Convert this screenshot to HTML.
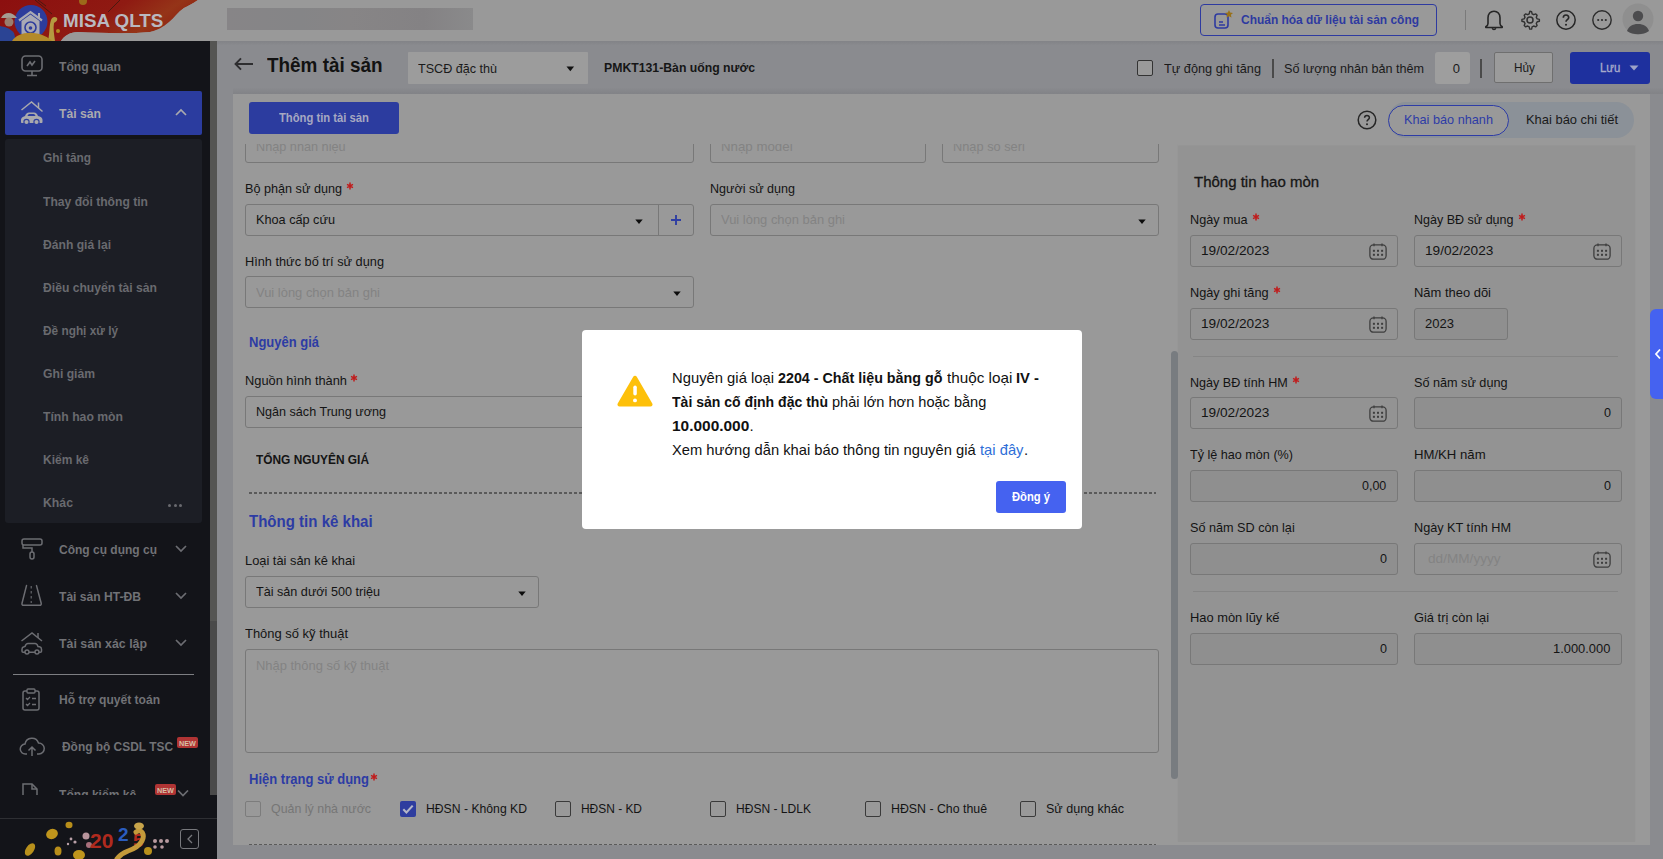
<!DOCTYPE html>
<html lang="vi"><head><meta charset="utf-8"><title>MISA QLTS - Thêm tài sản</title>
<style>
html,body{margin:0;padding:0;}
body{width:1663px;height:859px;overflow:hidden;position:relative;font-family:"Liberation Sans",sans-serif;background:#8a8b8f;}
body *{font-family:"Liberation Sans",sans-serif;}
</style></head><body>

<div style="position:absolute;left:0px;top:0px;width:1663px;height:41px;background:#999999"></div>
<div style="position:absolute;left:0px;top:41px;width:217px;height:818px;background:#131419"></div>
<div style="position:absolute;left:217px;top:41px;width:1446px;height:818px;background:#8a8b8f"></div>
<div style="position:absolute;left:217px;top:41px;width:1446px;height:4px;background:linear-gradient(#828387,#898a8e)"></div>
<div style="position:absolute;left:233px;top:88px;width:1430px;height:6px;background:linear-gradient(#898a8e,#828387)"></div>
<svg style="position:absolute;left:0;top:0" width="205" height="41" viewBox="0 0 205 41">
<defs><linearGradient id="rg" x1="0" y1="0" x2="1" y2="0.3"><stop offset="0" stop-color="#8c0f0f"/><stop offset="0.6" stop-color="#8f1a12"/><stop offset="0.85" stop-color="#953418"/><stop offset="1" stop-color="#8f2412"/></linearGradient></defs>
<path d="M0 0 H198 C192 4 188 6 184 8 C178 12 174 18 169 22 C163 27 158 30 150 32 C130 34 100 33 78 32 C70 32 64 36 61 41 H0 Z" fill="url(#rg)"/>
<circle cx="31" cy="21.5" r="16.5" fill="#2d3c9c"/>
<path d="M19 20.5 L30.5 12 L42 20.5" fill="none" stroke="#a9a9b4" stroke-width="2.2"/>
<path d="M39 13v5" stroke="#a9a9b4" stroke-width="2"/>
<path d="M21.5 21 L30.5 14.5 L39.5 21 V34 H21.5 Z" fill="#a9a9b4"/>
<circle cx="30.5" cy="27.5" r="5.5" fill="none" stroke="#2d3c9c" stroke-width="1.6"/>
<circle cx="30.5" cy="28" r="1.8" fill="#2d3c9c"/>
<path d="M1 18 C4 12 12 11 17 18 Z" fill="#a59d92"/>
<circle cx="9" cy="22" r="4.5" fill="#9a7d6e"/>
<path d="M0 26 C5 27 10 28 14 33 L16 41 H0Z" fill="#2b4494"/>
<path d="M48 41 C50 32 49 26 51 20 C52 17 55 16 57 18 C58 20 56 22 54 23 C53 28 54 34 55 41 Z" fill="#b59a40"/>
<path d="M12 41 C16 35 24 32 34 33 C42 34 48 37 52 41 Z" fill="#b38a2a"/>
<circle cx="58" cy="31" r="2" fill="#b58a20"/>
<circle cx="83" cy="1" r="4" fill="#9c6a1a"/>
<path d="M35 0 L52 14 M38 0 L46 6" stroke="#3a1a10" stroke-width="0.8"/>
<path d="M120 0 L108 12" stroke="#3a1a10" stroke-width="0.8"/>
<path d="M150 32 C160 30 166 26 170 22 C174 18 178 12 184 8 C188 6 192 4 198 0 H205 V41 H61 C64 36 70 32 78 32 C100 33 130 34 150 32Z" fill="#999999"/>
</svg>
<span style="position:absolute;left:62.50px;top:10.92px;font-size:19px;line-height:19px;font-weight:700;color:#b9b9c0;white-space:nowrap;transform:scaleX(0.9899);transform-origin:0 0;">MISA QLTS</span>
<div style="position:absolute;left:227px;top:8px;width:246px;height:22px;background:linear-gradient(90deg,#878587,#858587 30%,#878586 50%,#848284 80%,#8a8a8b)"></div>
<div style="position:absolute;left:1200px;top:4px;width:237px;height:32px;box-sizing:border-box;border:1.5px solid #2e3aa0;border-radius:4px"></div>
<svg style="position:absolute;left:1212px;top:9px;" width="22" height="22" viewBox="0 0 22 22"><rect x="3" y="5" width="13" height="14" rx="3" fill="none" stroke="#2e3aa0" stroke-width="1.6"/><path d="M7 13h4M7 16h6" stroke="#2e3aa0" stroke-width="1.4"/><path d="M17 1l1.2 2.6 2.8.3-2.1 1.9.6 2.8-2.5-1.4-2.5 1.4.6-2.8-2.1-1.9 2.8-.3z" fill="#98711a"/></svg>
<span style="position:absolute;left:1241.00px;top:13.00px;font-size:13px;line-height:13px;font-weight:700;color:#2e3aa0;white-space:nowrap;transform:scaleX(0.9194);transform-origin:0 0;">Chuẩn hóa dữ liệu tài sản công</span>
<div style="position:absolute;left:1465px;top:10px;width:1px;height:20px;background:#7a7a7a"></div>
<svg style="position:absolute;left:1483px;top:9px;" width="22" height="22" viewBox="0 0 22 22"><path d="M11 2.2c-3.6 0-6 2.8-6 6.6v5.6c0 1.2-.8 2.4-2.2 3.3v.8h16.4v-.8c-1.4-.9-2.2-2.1-2.2-3.3V8.8c0-3.8-2.4-6.6-6-6.6z" fill="none" stroke="#262626" stroke-width="1.6" stroke-linejoin="round"/><path d="M9.3 19.2c.2.9.9 1.3 1.7 1.3s1.5-.4 1.7-1.3" fill="none" stroke="#262626" stroke-width="1.5"/></svg>
<svg style="position:absolute;left:1519px;top:9px;" width="22" height="22" viewBox="0 0 22 22"><path d="M11 2.3l1.6.3.5 2.2 1.6.9 2.1-.8 1.3 1.3-.8 2.1.9 1.6 2.2.5v1.9l-2.2.5-.9 1.6.8 2.1-1.3 1.3-2.1-.8-1.6.9-.5 2.2h-1.9l-.5-2.2-1.6-.9-2.1.8-1.3-1.3.8-2.1-.9-1.6-2.2-.5v-1.9l2.2-.5.9-1.6-.8-2.1 1.3-1.3 2.1.8 1.6-.9.5-2.2z" fill="none" stroke="#303030" stroke-width="1.4" stroke-linejoin="round"/><circle cx="11" cy="11" r="3" fill="none" stroke="#303030" stroke-width="1.5"/></svg>
<svg style="position:absolute;left:1555px;top:9px;" width="22" height="22" viewBox="0 0 22 22"><circle cx="11" cy="11" r="9.2" fill="none" stroke="#262626" stroke-width="1.5"/><path d="M8.3 8.7a2.7 2.7 0 015.4 0c0 1.9-2.7 2.1-2.7 4" fill="none" stroke="#262626" stroke-width="1.6"/><circle cx="11" cy="15.7" r="1.05" fill="#262626"/></svg>
<svg style="position:absolute;left:1591px;top:9px;" width="22" height="22" viewBox="0 0 22 22"><circle cx="11" cy="11" r="9.2" fill="none" stroke="#2c2c2c" stroke-width="1.4"/><circle cx="7.2" cy="11" r="1.1" fill="#2c2c2c"/><circle cx="11" cy="11" r="1.1" fill="#2c2c2c"/><circle cx="14.8" cy="11" r="1.1" fill="#2c2c2c"/></svg>
<svg style="position:absolute;left:1622px;top:3px;" width="32" height="32" viewBox="0 0 32 32"><circle cx="16" cy="16" r="15.5" fill="#8f8f8f"/><circle cx="16" cy="13" r="5.2" fill="#4c4c4e"/><path d="M5 28c1.5-4.5 5.5-7 11-7s9.5 2.5 11 7c-3 2.3-7 3.3-11 3.3S8 30.300 5 28z" fill="#4c4c4e"/></svg>
<svg style="position:absolute;left:20px;top:54px;" width="24" height="24" viewBox="0 0 24 24"><rect x="2" y="2" width="20" height="15" rx="3.5" fill="none" stroke="#6c6d72" stroke-width="1.6"/><path d="M12 17v4M7 21.5h10" stroke="#6c6d72" stroke-width="1.6"/><path d="M7 12l3-4 2 3 3-4" fill="none" stroke="#6c6d72" stroke-width="1.6"/></svg>
<span style="position:absolute;left:59.00px;top:59.50px;font-size:13px;line-height:13px;font-weight:700;color:#717276;white-space:nowrap;transform:scaleX(0.9332);transform-origin:0 0;">Tổng quan</span>
<div style="position:absolute;left:5px;top:91px;width:197px;height:44px;background:#2b3c9f;border-radius:2px"></div>
<svg style="position:absolute;left:20px;top:100px;" width="25" height="26" viewBox="0 0 25 26"><path d="M1.5 10L11.5 2l11 9.5" fill="none" stroke="#a9a9ad" stroke-width="1.5"/><path d="M18.5 2.5v5.5" stroke="#a9a9ad" stroke-width="1.5"/><path d="M5 16c.8-2.3 2-3.6 4-3.6h5c2 0 3.2 1.3 4 3.6l1.6.4c1.6.4 2.9 1.7 2.9 3.4v2.2c0 .6-.4 1-1 1H2c-.6 0-1-.4-1-1v-2.2c0-1.7 1.3-3 2.9-3.4z" fill="#a9a9ad"/><path d="M7.5 16c.4-1.3 1-2 2-2h4c1 0 1.6.7 2 2z" fill="#2b3c9f"/><circle cx="6.5" cy="22" r="2.6" fill="#a9a9ad" stroke="#2b3c9f" stroke-width="1.1"/><circle cx="16.5" cy="22" r="2.6" fill="#a9a9ad" stroke="#2b3c9f" stroke-width="1.1"/></svg>
<span style="position:absolute;left:59.00px;top:107.00px;font-size:13px;line-height:13px;font-weight:700;color:#aaaaae;white-space:nowrap;transform:scaleX(0.9376);transform-origin:0 0;">Tài sản</span>
<svg style="position:absolute;left:174px;top:107px;" width="14" height="10" viewBox="0 0 14 10"><path d="M2 8l5-5 5 5" fill="none" stroke="#aaaaae" stroke-width="1.7"/></svg>
<div style="position:absolute;left:5px;top:139px;width:197px;height:384px;background:#1c1e25;border-radius:3px"></div>
<span style="position:absolute;left:43.00px;top:151.40px;font-size:13px;line-height:13px;font-weight:700;color:#696a6f;white-space:nowrap;transform:scaleX(0.9105);transform-origin:0 0;">Ghi tăng</span>
<span style="position:absolute;left:43.00px;top:194.50px;font-size:13px;line-height:13px;font-weight:700;color:#696a6f;white-space:nowrap;transform:scaleX(0.9320);transform-origin:0 0;">Thay đổi thông tin</span>
<span style="position:absolute;left:43.00px;top:237.60px;font-size:13px;line-height:13px;font-weight:700;color:#696a6f;white-space:nowrap;transform:scaleX(0.9319);transform-origin:0 0;">Đánh giá lại</span>
<span style="position:absolute;left:43.00px;top:280.70px;font-size:13px;line-height:13px;font-weight:700;color:#696a6f;white-space:nowrap;transform:scaleX(0.9337);transform-origin:0 0;">Điều chuyển tài sản</span>
<span style="position:absolute;left:43.00px;top:323.80px;font-size:13px;line-height:13px;font-weight:700;color:#696a6f;white-space:nowrap;transform:scaleX(0.9105);transform-origin:0 0;">Đề nghị xử lý</span>
<span style="position:absolute;left:43.00px;top:366.90px;font-size:13px;line-height:13px;font-weight:700;color:#696a6f;white-space:nowrap;transform:scaleX(0.9348);transform-origin:0 0;">Ghi giảm</span>
<span style="position:absolute;left:43.00px;top:410.00px;font-size:13px;line-height:13px;font-weight:700;color:#696a6f;white-space:nowrap;transform:scaleX(0.9388);transform-origin:0 0;">Tính hao mòn</span>
<span style="position:absolute;left:43.00px;top:453.10px;font-size:13px;line-height:13px;font-weight:700;color:#696a6f;white-space:nowrap;transform:scaleX(0.9223);transform-origin:0 0;">Kiểm kê</span>
<span style="position:absolute;left:43.00px;top:496.20px;font-size:13px;line-height:13px;font-weight:700;color:#696a6f;white-space:nowrap;transform:scaleX(0.9435);transform-origin:0 0;">Khác</span>
<div style="position:absolute;left:168.0px;top:504px;width:3.0px;height:3px;background:#696a6f;border-radius:50%"></div>
<div style="position:absolute;left:173.5px;top:504px;width:3.0px;height:3px;background:#696a6f;border-radius:50%"></div>
<div style="position:absolute;left:179.0px;top:504px;width:3.0px;height:3px;background:#696a6f;border-radius:50%"></div>
<svg style="position:absolute;left:20px;top:537px;" width="24" height="24" viewBox="0 0 24 24"><rect x="2" y="2" width="20" height="6" rx="2" fill="none" stroke="#6c6d72" stroke-width="1.5"/><path d="M3 8v3h9v4" fill="none" stroke="#6c6d72" stroke-width="1.5"/><rect x="10" y="15" width="4" height="7" rx="2" fill="none" stroke="#6c6d72" stroke-width="1.5"/></svg>
<span style="position:absolute;left:59.00px;top:543.00px;font-size:13px;line-height:13px;font-weight:700;color:#717276;white-space:nowrap;transform:scaleX(0.9232);transform-origin:0 0;">Công cụ dụng cụ</span>
<svg style="position:absolute;left:20px;top:584px;" width="24" height="24" viewBox="0 0 24 24"><path d="M6.5 1.6L2 19.3c-.3 1.2.4 2 1.5 2h16.2c1.1 0 1.8-.8 1.5-2L16.5 1.6" fill="none" stroke="#6c6d72" stroke-width="1.5" stroke-linecap="round" stroke-linejoin="round"/><path d="M11.2 2v2.5M11.2 7v2.5M11.2 12v2.5M11.2 17v2" stroke="#6c6d72" stroke-width="1.1"/></svg>
<span style="position:absolute;left:59.00px;top:590.00px;font-size:13px;line-height:13px;font-weight:700;color:#717276;white-space:nowrap;transform:scaleX(0.9305);transform-origin:0 0;">Tài sản HT-ĐB</span>
<svg style="position:absolute;left:20px;top:631px;" width="25" height="25" viewBox="0 0 25 25"><path d="M1.5 10L12 2l10 8" fill="none" stroke="#6c6d72" stroke-width="1.5"/><path d="M18 2v5" stroke="#6c6d72" stroke-width="1.5"/><path d="M5 15.5c.6-2 1.5-3 3-3h7c1.5 0 2.4 1 3 3l1.5.3c1.2.3 2 1.2 2 2.4v2c0 .6-.4 1-1 1H3c-.6 0-1-.4-1-1v-2c0-1.2.8-2.1 2-2.4z" fill="none" stroke="#6c6d72" stroke-width="1.5"/><circle cx="7" cy="21" r="2" fill="#131419" stroke="#6c6d72" stroke-width="1.4"/><circle cx="17" cy="21" r="2" fill="#131419" stroke="#6c6d72" stroke-width="1.4"/></svg>
<span style="position:absolute;left:59.00px;top:636.80px;font-size:13px;line-height:13px;font-weight:700;color:#717276;white-space:nowrap;transform:scaleX(0.9514);transform-origin:0 0;">Tài sản xác lập</span>
<svg style="position:absolute;left:174px;top:544px;top:544px" width="14" height="10" viewBox="0 0 14 10"><path d="M2 2l5 5 5-5" fill="none" stroke="#6c6d72" stroke-width="1.7"/></svg>
<svg style="position:absolute;left:174px;top:544px;top:591px" width="14" height="10" viewBox="0 0 14 10"><path d="M2 2l5 5 5-5" fill="none" stroke="#6c6d72" stroke-width="1.7"/></svg>
<svg style="position:absolute;left:174px;top:544px;top:638px" width="14" height="10" viewBox="0 0 14 10"><path d="M2 2l5 5 5-5" fill="none" stroke="#6c6d72" stroke-width="1.7"/></svg>
<div style="position:absolute;left:13px;top:673.5px;width:181px;height:1.5px;background:#7d7e82"></div>
<svg style="position:absolute;left:20px;top:688px;" width="24" height="24" viewBox="0 0 24 24"><rect x="3" y="3" width="16" height="19" rx="2" fill="none" stroke="#6c6d72" stroke-width="1.5"/><rect x="7" y="1" width="8" height="4" rx="1" fill="#131419" stroke="#6c6d72" stroke-width="1.4"/><path d="M6 10l1.5 1.5L10 9M6 16l1.5 1.5L10 15M12 10.5h4M12 16.5h4" fill="none" stroke="#6c6d72" stroke-width="1.3"/></svg>
<span style="position:absolute;left:59.00px;top:693.00px;font-size:13px;line-height:13px;font-weight:700;color:#717276;white-space:nowrap;transform:scaleX(0.9273);transform-origin:0 0;">Hỗ trợ quyết toán</span>
<svg style="position:absolute;left:19px;top:735px;" width="27" height="24" viewBox="0 0 27 24"><path d="M8 19H6.5a5 5 0 01-.5-10A7 7 0 0119.5 8 5.5 5.5 0 0120 19h-2" fill="none" stroke="#6c6d72" stroke-width="1.5"/><path d="M13 21v-9M9.5 15.5L13 12l3.5 3.5" fill="none" stroke="#6c6d72" stroke-width="1.5"/></svg>
<span style="position:absolute;left:61.50px;top:740.00px;font-size:13px;line-height:13px;font-weight:700;color:#717276;white-space:nowrap;transform:scaleX(0.9166);transform-origin:0 0;">Đồng bộ CSDL TSC</span>
<div style="position:absolute;left:177px;top:737px;width:21px;height:11px;background:#b03434;border-radius:2px"></div>
<span style="position:absolute;left:179.00px;top:740.37px;font-size:7px;line-height:7px;font-weight:700;color:#d6bfa6;white-space:nowrap;transform:scaleX(1.0402);transform-origin:0 0;">NEW</span>
<div style="position:absolute;left:0;top:779px;width:209px;height:16px;overflow:hidden"><svg style="position:absolute;left:20px;top:3px" width="24" height="24" viewBox="0 0 24 24"><path d="M3 2h9l5 5v15H3z" fill="none" stroke="#6c6d72" stroke-width="1.5"/><path d="M12 2v5h5" fill="none" stroke="#6c6d72" stroke-width="1.5"/></svg></div>
<div style="position:absolute;left:0;top:779px;width:209px;height:15.5px;overflow:hidden"><span style="position:absolute;left:59px;top:8.5px;font-size:13px;line-height:13px;font-weight:700;color:#717276;white-space:nowrap;transform:scaleX(0.93);transform-origin:0 0">Tổng kiểm kê</span></div>
<div style="position:absolute;left:155px;top:784px;width:21px;height:11px;background:#b03434;border-radius:2px"></div>
<span style="position:absolute;left:157.00px;top:787.37px;font-size:7px;line-height:7px;font-weight:700;color:#d6bfa6;white-space:nowrap;transform:scaleX(1.0402);transform-origin:0 0;">NEW</span>
<svg style="position:absolute;left:176px;top:790px" width="14" height="7" viewBox="0 0 14 7"><path d="M2 0.5l5 5 5-5" fill="none" stroke="#6c6d72" stroke-width="1.7"/></svg>
<div style="position:absolute;left:209.5px;top:41px;width:7.5px;height:580px;background:#555553"></div>
<div style="position:absolute;left:209.5px;top:621px;width:7.5px;height:174px;background:#4a4a4a"></div>
<div style="position:absolute;left:0px;top:817.5px;width:217px;height:1.0px;background:#2e2f33"></div>
<svg style="position:absolute;left:0;top:818px" width="178" height="41" viewBox="0 818 178 41">
<ellipse cx="30" cy="849.5" rx="4" ry="7" fill="#b8901c" transform="rotate(35 30 849.5)"/>
<ellipse cx="52" cy="834" rx="6" ry="5" fill="#bf951c" transform="rotate(-20 52 834)"/>
<ellipse cx="69" cy="825" rx="3.5" ry="3.2" fill="#b88e1a"/>
<ellipse cx="58" cy="851" rx="3.5" ry="4.5" fill="#b88e1a"/>
<ellipse cx="79" cy="855" rx="6" ry="5" fill="#bf951c"/>
<circle cx="71" cy="839" r="1.4" fill="#b9a0a8"/><circle cx="75" cy="842" r="1.6" fill="#b9a0a8"/><circle cx="68" cy="844" r="1.2" fill="#b9a0a8"/>
<circle cx="86" cy="836" r="3.5" fill="#b8959c"/><circle cx="89" cy="845" r="3" fill="#a86f7c"/>
<text x="90" y="848" font-family="Liberation Sans" font-weight="700" font-size="21" fill="#b02a1e">20</text>
<text x="118" y="841" font-family="Liberation Sans" font-weight="700" font-size="19" fill="#2a5cbf">2</text>
<text x="133" y="847" font-family="Liberation Sans" font-weight="700" font-size="19" fill="#b02a1e">5</text>
<path d="M136 832c6-4 9 3 6 9-3 5-8 8-14 10-5 2-9 5-11 8" fill="none" stroke="#c49a3a" stroke-width="5" stroke-linecap="round"/>
<ellipse cx="139" cy="826" rx="5" ry="3.5" fill="#c7a44a"/>
<circle cx="148" cy="851" r="4" fill="#b8901c"/>
<circle cx="155" cy="841" r="2" fill="#b89aa0"/><circle cx="161" cy="841" r="2" fill="#b89aa0"/><circle cx="167" cy="841" r="2" fill="#b89aa0"/><circle cx="155" cy="847" r="1.8" fill="#b89aa0"/><circle cx="162" cy="847" r="1.8" fill="#b89aa0"/>
</svg>
<div style="position:absolute;left:180px;top:829px;width:19px;height:20px;box-sizing:border-box;border:1.5px solid #77787c;border-radius:3px"></div>
<svg style="position:absolute;left:184px;top:833px;" width="12" height="12" viewBox="0 0 12 12"><path d="M8 2L4 6l4 4" fill="none" stroke="#77787c" stroke-width="1.3"/></svg>
<svg style="position:absolute;left:233px;top:56px;" width="22" height="16" viewBox="0 0 22 16"><path d="M2.5 8h17.5M8 2.3L2.5 8l5.5 5.7" fill="none" stroke="#2e2e30" stroke-width="1.9"/></svg>
<span style="position:absolute;left:267.20px;top:54.87px;font-size:20px;line-height:20px;font-weight:700;color:#121212;white-space:nowrap;transform:scaleX(0.9455);transform-origin:0 0;">Thêm tài sản</span>
<div style="position:absolute;left:408px;top:52px;width:180px;height:32px;background:#9c9c9c;border-radius:1px"></div>
<span style="position:absolute;left:417.50px;top:62.00px;font-size:13px;line-height:13px;font-weight:400;color:#1a1a1a;white-space:nowrap;transform:scaleX(0.9675);transform-origin:0 0;">TSCĐ đặc thù</span>
<svg style="position:absolute;left:566px;top:66px;" width="9" height="6" viewBox="0 0 9 6"><path d="M0.5 0.5h7.6L4.3 5.2z" fill="#111"/></svg>
<span style="position:absolute;left:604.00px;top:61.00px;font-size:13px;line-height:13px;font-weight:700;color:#161616;white-space:nowrap;transform:scaleX(0.9424);transform-origin:0 0;">PMKT131-Bàn uống nước</span>
<div style="position:absolute;left:1137px;top:60px;width:16px;height:16px;box-sizing:border-box;border:1.3px solid #333333;border-radius:2px;background:#9a9a9a"></div>
<span style="position:absolute;left:1164.00px;top:62.00px;font-size:13px;line-height:13px;font-weight:400;color:#1a1a1a;white-space:nowrap;transform:scaleX(0.9792);transform-origin:0 0;">Tự động ghi tăng</span>
<div style="position:absolute;left:1272px;top:59px;width:2px;height:18.5px;background:#4a4a4a"></div>
<span style="position:absolute;left:1284.00px;top:62.00px;font-size:13px;line-height:13px;font-weight:400;color:#1a1a1a;white-space:nowrap;transform:scaleX(0.9693);transform-origin:0 0;">Số lượng nhân bản thêm</span>
<div style="position:absolute;left:1435px;top:52px;width:35px;height:32px;background:#9e9e9e;border-radius:3px"></div>
<span style="position:absolute;left:1406.30px;width:100px;text-align:center;top:62.00px;font-size:13px;line-height:13px;font-weight:400;color:#1a1a1a;white-space:nowrap;">0</span>
<div style="position:absolute;left:1480px;top:59px;width:2px;height:18.5px;background:#4a4a4a"></div>
<div style="position:absolute;left:1494px;top:52px;width:59px;height:31px;box-sizing:border-box;border:1px solid #6f6f6f;border-radius:2px;background:#9b9b9b"></div>
<span style="position:absolute;left:1513.50px;top:61.00px;font-size:13px;line-height:13px;font-weight:400;color:#1a1a1a;white-space:nowrap;transform:scaleX(0.9081);transform-origin:0 0;">Hủy</span>
<div style="position:absolute;left:1570px;top:52px;width:80px;height:32px;background:#1e309e;border-radius:3px"></div>
<span style="position:absolute;left:1600.00px;top:61.00px;font-size:13px;line-height:13px;font-weight:400;color:#a6aacb;white-space:nowrap;transform:scaleX(0.8761);transform-origin:0 0;-webkit-text-stroke:0.35px #a6aacb;">Lưu</span>
<svg style="position:absolute;left:1628px;top:64px;" width="12" height="8" viewBox="0 0 12 8"><path d="M1.5 1.5h9L6 6.5z" fill="#9ea3c8"/></svg>
<div style="position:absolute;left:233px;top:94px;width:1417px;height:751px;background:#999999"></div>
<div style="position:absolute;left:1178px;top:146px;width:457px;height:696px;background:#939393;box-shadow:0 -1px 2px rgba(0,0,0,0.04)"></div>
<div style="position:absolute;left:245px;top:132px;width:449px;height:31px;box-sizing:border-box;border:1px solid #787878;border-radius:3px;"></div>
<span style="position:absolute;left:256.00px;top:140.00px;font-size:13px;line-height:13px;font-weight:400;color:#838383;white-space:nowrap;transform:scaleX(0.9759);transform-origin:0 0;">Nhập nhãn hiệu</span>
<div style="position:absolute;left:710px;top:132px;width:216px;height:31px;box-sizing:border-box;border:1px solid #787878;border-radius:3px;"></div>
<span style="position:absolute;left:721.00px;top:140.00px;font-size:13px;line-height:13px;font-weight:400;color:#838383;white-space:nowrap;transform:scaleX(1.0213);transform-origin:0 0;">Nhập model</span>
<div style="position:absolute;left:942px;top:132px;width:217px;height:31px;box-sizing:border-box;border:1px solid #787878;border-radius:3px;"></div>
<span style="position:absolute;left:953.00px;top:140.00px;font-size:13px;line-height:13px;font-weight:400;color:#838383;white-space:nowrap;transform:scaleX(0.9838);transform-origin:0 0;">Nhập số seri</span>
<span style="position:absolute;left:245.00px;top:182.00px;font-size:13px;line-height:13px;font-weight:400;color:#141414;white-space:nowrap;transform:scaleX(0.9721);transform-origin:0 0;">Bộ phận sử dụng</span>
<svg style="position:absolute;left:346px;top:182px;" width="8" height="8" viewBox="0 0 8 8"><path d="M4 0.6V7.4M1.05 2.3L6.95 5.7M1.05 5.7L6.95 2.3" stroke="#c01c1c" stroke-width="1.5"/></svg>
<div style="position:absolute;left:245px;top:204px;width:449px;height:32px;box-sizing:border-box;border:1px solid #787878;border-radius:3px;"></div>
<div style="position:absolute;left:658px;top:205px;width:1px;height:30px;background:#787878"></div>
<span style="position:absolute;left:256.00px;top:212.80px;font-size:13px;line-height:13px;font-weight:400;color:#141414;white-space:nowrap;transform:scaleX(0.9755);transform-origin:0 0;">Khoa cấp cứu</span>
<svg style="position:absolute;left:634.5px;top:219.3px;" width="8" height="6" viewBox="0 0 8 6"><path d="M0.3 0.5h7.4L4 5z" fill="#0d0d0d"/></svg>
<svg style="position:absolute;left:669px;top:213px;" width="14" height="14" viewBox="0 0 14 14"><path d="M7 2v10M2 7h10" stroke="#2f3ea2" stroke-width="1.9"/></svg>
<span style="position:absolute;left:710.00px;top:182.00px;font-size:13px;line-height:13px;font-weight:400;color:#141414;white-space:nowrap;transform:scaleX(0.9649);transform-origin:0 0;">Người sử dụng</span>
<div style="position:absolute;left:710px;top:204px;width:449px;height:32px;box-sizing:border-box;border:1px solid #787878;border-radius:3px;"></div>
<span style="position:absolute;left:721.00px;top:212.80px;font-size:13px;line-height:13px;font-weight:400;color:#838383;white-space:nowrap;transform:scaleX(0.9955);transform-origin:0 0;">Vui lòng chọn bản ghi</span>
<svg style="position:absolute;left:1137.5px;top:219.3px;" width="8" height="6" viewBox="0 0 8 6"><path d="M0.3 0.5h7.4L4 5z" fill="#0d0d0d"/></svg>
<span style="position:absolute;left:245.00px;top:254.90px;font-size:13px;line-height:13px;font-weight:400;color:#141414;white-space:nowrap;transform:scaleX(0.9809);transform-origin:0 0;">Hình thức bố trí sử dụng</span>
<div style="position:absolute;left:245px;top:276px;width:449px;height:32px;box-sizing:border-box;border:1px solid #787878;border-radius:3px;"></div>
<span style="position:absolute;left:256.00px;top:285.60px;font-size:13px;line-height:13px;font-weight:400;color:#838383;white-space:nowrap;transform:scaleX(0.9955);transform-origin:0 0;">Vui lòng chọn bản ghi</span>
<svg style="position:absolute;left:672.5px;top:291.3px;" width="8" height="6" viewBox="0 0 8 6"><path d="M0.3 0.5h7.4L4 5z" fill="#0d0d0d"/></svg>
<span style="position:absolute;left:249.00px;top:334.95px;font-size:14px;line-height:14px;font-weight:700;color:#2d3ca4;white-space:nowrap;transform:scaleX(0.9275);transform-origin:0 0;">Nguyên giá</span>
<span style="position:absolute;left:245.00px;top:373.90px;font-size:13px;line-height:13px;font-weight:400;color:#141414;white-space:nowrap;transform:scaleX(0.9867);transform-origin:0 0;">Nguồn hình thành</span>
<svg style="position:absolute;left:350px;top:373.9px;" width="8" height="8" viewBox="0 0 8 8"><path d="M4 0.6V7.4M1.05 2.3L6.95 5.7M1.05 5.7L6.95 2.3" stroke="#c01c1c" stroke-width="1.5"/></svg>
<div style="position:absolute;left:245px;top:396px;width:449px;height:32px;box-sizing:border-box;border:1px solid #787878;border-radius:3px;"></div>
<span style="position:absolute;left:256.40px;top:404.90px;font-size:13px;line-height:13px;font-weight:400;color:#141414;white-space:nowrap;transform:scaleX(0.9679);transform-origin:0 0;">Ngân sách Trung ương</span>
<span style="position:absolute;left:255.60px;top:452.90px;font-size:13px;line-height:13px;font-weight:700;color:#141414;white-space:nowrap;transform:scaleX(0.9149);transform-origin:0 0;">TỔNG NGUYÊN GIÁ</span>
<div style="position:absolute;left:249px;top:492px;width:907px;height:2px;background:repeating-linear-gradient(90deg,#5a5a5a 0 3px,transparent 3px 5px)"></div>
<span style="position:absolute;left:249.00px;top:513.96px;font-size:16px;line-height:16px;font-weight:700;color:#2d3ca4;white-space:nowrap;transform:scaleX(0.9395);transform-origin:0 0;">Thông tin kê khai</span>
<span style="position:absolute;left:245.00px;top:554.10px;font-size:13px;line-height:13px;font-weight:400;color:#141414;white-space:nowrap;transform:scaleX(0.9883);transform-origin:0 0;">Loại tài sản kê khai</span>
<div style="position:absolute;left:245px;top:576px;width:294px;height:32px;box-sizing:border-box;border:1px solid #787878;border-radius:3px;"></div>
<span style="position:absolute;left:256.00px;top:585.10px;font-size:13px;line-height:13px;font-weight:400;color:#141414;white-space:nowrap;transform:scaleX(0.9703);transform-origin:0 0;">Tài sản dưới 500 triệu</span>
<svg style="position:absolute;left:517.5px;top:591.3px;" width="8" height="6" viewBox="0 0 8 6"><path d="M0.3 0.5h7.4L4 5z" fill="#0d0d0d"/></svg>
<span style="position:absolute;left:245.00px;top:626.50px;font-size:13px;line-height:13px;font-weight:400;color:#141414;white-space:nowrap;transform:scaleX(0.9967);transform-origin:0 0;">Thông số kỹ thuật</span>
<div style="position:absolute;left:245px;top:649px;width:914px;height:104px;box-sizing:border-box;border:1px solid #787878;border-radius:3px;"></div>
<span style="position:absolute;left:256.00px;top:659.00px;font-size:13px;line-height:13px;font-weight:400;color:#838383;white-space:nowrap;transform:scaleX(0.9947);transform-origin:0 0;">Nhập thông số kỹ thuật</span>
<span style="position:absolute;left:249.00px;top:771.65px;font-size:14px;line-height:14px;font-weight:700;color:#2d3ca4;white-space:nowrap;transform:scaleX(0.9292);transform-origin:0 0;">Hiện trạng sử dụng</span>
<svg style="position:absolute;left:369.5px;top:772.5px;" width="8" height="8" viewBox="0 0 8 8"><path d="M4 0.6V7.4M1.05 2.3L6.95 5.7M1.05 5.7L6.95 2.3" stroke="#c01c1c" stroke-width="1.5"/></svg>
<div style="position:absolute;left:245px;top:801px;width:16px;height:16px;box-sizing:border-box;border:1px solid #7c7c7c;border-radius:2px"></div>
<span style="position:absolute;left:271.00px;top:802.00px;font-size:13px;line-height:13px;font-weight:400;color:#767676;white-space:nowrap;transform:scaleX(0.9552);transform-origin:0 0;">Quản lý nhà nước</span>
<div style="position:absolute;left:400px;top:801px;width:16px;height:16px;background:#2e3d9f;border-radius:2px"></div>
<svg style="position:absolute;left:400px;top:801px;" width="16" height="16" viewBox="0 0 16 16"><path d="M3.3 8.3l3.1 3.1 6.3-6.8" fill="none" stroke="#b4b6c8" stroke-width="2.1"/></svg>
<span style="position:absolute;left:426.00px;top:802.00px;font-size:13px;line-height:13px;font-weight:400;color:#141414;white-space:nowrap;transform:scaleX(0.9382);transform-origin:0 0;">HĐSN - Không KD</span>
<div style="position:absolute;left:555px;top:801px;width:16px;height:16px;box-sizing:border-box;border:1px solid #3a3a3a;border-radius:2px"></div>
<span style="position:absolute;left:581.00px;top:802.00px;font-size:13px;line-height:13px;font-weight:400;color:#141414;white-space:nowrap;transform:scaleX(0.9179);transform-origin:0 0;">HĐSN - KD</span>
<div style="position:absolute;left:710px;top:801px;width:16px;height:16px;box-sizing:border-box;border:1px solid #3a3a3a;border-radius:2px"></div>
<span style="position:absolute;left:736.00px;top:802.00px;font-size:13px;line-height:13px;font-weight:400;color:#141414;white-space:nowrap;transform:scaleX(0.9268);transform-origin:0 0;">HĐSN - LDLK</span>
<div style="position:absolute;left:865px;top:801px;width:16px;height:16px;box-sizing:border-box;border:1px solid #3a3a3a;border-radius:2px"></div>
<span style="position:absolute;left:891.00px;top:802.00px;font-size:13px;line-height:13px;font-weight:400;color:#141414;white-space:nowrap;transform:scaleX(0.9490);transform-origin:0 0;">HĐSN - Cho thuê</span>
<div style="position:absolute;left:1020px;top:801px;width:16px;height:16px;box-sizing:border-box;border:1px solid #3a3a3a;border-radius:2px"></div>
<span style="position:absolute;left:1046.00px;top:802.00px;font-size:13px;line-height:13px;font-weight:400;color:#141414;white-space:nowrap;transform:scaleX(0.9631);transform-origin:0 0;">Sử dụng khác</span>
<div style="position:absolute;left:249px;top:843.5px;width:907px;height:1.5px;background:repeating-linear-gradient(90deg,#5a5a5a 0 3px,transparent 3px 5px)"></div>
<div style="position:absolute;left:1171px;top:351px;width:7px;height:428px;background:#787c80;border-radius:4px"></div>
<div style="position:absolute;left:233px;top:94px;width:945px;height:50px;background:#999999"></div>
<div style="position:absolute;left:1178px;top:94px;width:472px;height:51px;background:#999999"></div>
<div style="position:absolute;left:249px;top:102px;width:150px;height:32px;background:#2c3c9f;border-radius:3px"></div>
<span style="position:absolute;left:279.00px;top:112.34px;font-size:12px;line-height:12px;font-weight:700;color:#a6a8c2;white-space:nowrap;transform:scaleX(0.9375);transform-origin:0 0;">Thông tin tài sản</span>
<svg style="position:absolute;left:1357px;top:110px;" width="20" height="20" viewBox="0 0 20 20"><circle cx="10" cy="10" r="8.8" fill="none" stroke="#262626" stroke-width="1.5"/><path d="M7.6 7.8a2.4 2.4 0 014.8 0c0 1.8-2.4 1.9-2.4 3.6" fill="none" stroke="#262626" stroke-width="1.5"/><circle cx="10" cy="14.3" r="1" fill="#262626"/></svg>
<div style="position:absolute;left:1388px;top:102px;width:246px;height:35.5px;background:#8b9198;border-radius:18px"></div>
<div style="position:absolute;left:1388px;top:105px;width:121px;height:31px;box-sizing:border-box;background:#999999;border:1px solid #2e3ca6;border-radius:16px"></div>
<span style="position:absolute;left:1404.00px;top:112.90px;font-size:13px;line-height:13px;font-weight:400;color:#2e3ca6;white-space:nowrap;transform:scaleX(0.9770);transform-origin:0 0;">Khai báo nhanh</span>
<span style="position:absolute;left:1525.50px;top:112.90px;font-size:13px;line-height:13px;font-weight:400;color:#1a1a1a;white-space:nowrap;transform:scaleX(0.9944);transform-origin:0 0;">Khai báo chi tiết</span>
<span style="position:absolute;left:1194.00px;top:173.90px;font-size:15px;line-height:15px;font-weight:400;color:#161616;white-space:nowrap;-webkit-text-stroke:0.3px #161616;">Thông tin hao mòn</span>
<span style="position:absolute;left:1190.00px;top:212.50px;font-size:13px;line-height:13px;font-weight:400;color:#141414;white-space:nowrap;transform:scaleX(0.9722);transform-origin:0 0;">Ngày mua</span>
<svg style="position:absolute;left:1252.1px;top:212.5px;" width="8" height="8" viewBox="0 0 8 8"><path d="M4 0.6V7.4M1.05 2.3L6.95 5.7M1.05 5.7L6.95 2.3" stroke="#c01c1c" stroke-width="1.5"/></svg>
<div style="position:absolute;left:1190px;top:235px;width:208px;height:32px;box-sizing:border-box;border:1px solid #787878;border-radius:3px;"></div>
<span style="position:absolute;left:1201.00px;top:244.00px;font-size:13px;line-height:13px;font-weight:400;color:#141414;white-space:nowrap;transform:scaleX(1.0510);transform-origin:0 0;">19/02/2023</span>
<svg style="position:absolute;left:1369px;top:242.5px;" width="18" height="17" viewBox="0 0 18 17"><rect x="0.9" y="1.9" width="16.2" height="14.3" rx="3.5" fill="none" stroke="#3e3e3e" stroke-width="1.3"/><path d="M5 0.6v2.6M13 0.6v2.6" stroke="#3e3e3e" stroke-width="1.3"/><rect x="3.9000000000000004" y="6.8" width="2" height="2" fill="#3e3e3e"/><rect x="3.9000000000000004" y="10.8" width="2" height="2" fill="#3e3e3e"/><rect x="8" y="6.8" width="2" height="2" fill="#3e3e3e"/><rect x="8" y="10.8" width="2" height="2" fill="#3e3e3e"/><rect x="12.1" y="6.8" width="2" height="2" fill="#3e3e3e"/><rect x="12.1" y="10.8" width="2" height="2" fill="#3e3e3e"/></svg>
<span style="position:absolute;left:1414.00px;top:212.50px;font-size:13px;line-height:13px;font-weight:400;color:#141414;white-space:nowrap;transform:scaleX(0.9625);transform-origin:0 0;">Ngày BĐ sử dụng</span>
<svg style="position:absolute;left:1518.0px;top:212.5px;" width="8" height="8" viewBox="0 0 8 8"><path d="M4 0.6V7.4M1.05 2.3L6.95 5.7M1.05 5.7L6.95 2.3" stroke="#c01c1c" stroke-width="1.5"/></svg>
<div style="position:absolute;left:1414px;top:235px;width:208px;height:32px;box-sizing:border-box;border:1px solid #787878;border-radius:3px;"></div>
<span style="position:absolute;left:1425.00px;top:244.00px;font-size:13px;line-height:13px;font-weight:400;color:#141414;white-space:nowrap;transform:scaleX(1.0510);transform-origin:0 0;">19/02/2023</span>
<svg style="position:absolute;left:1593px;top:242.5px;" width="18" height="17" viewBox="0 0 18 17"><rect x="0.9" y="1.9" width="16.2" height="14.3" rx="3.5" fill="none" stroke="#3e3e3e" stroke-width="1.3"/><path d="M5 0.6v2.6M13 0.6v2.6" stroke="#3e3e3e" stroke-width="1.3"/><rect x="3.9000000000000004" y="6.8" width="2" height="2" fill="#3e3e3e"/><rect x="3.9000000000000004" y="10.8" width="2" height="2" fill="#3e3e3e"/><rect x="8" y="6.8" width="2" height="2" fill="#3e3e3e"/><rect x="8" y="10.8" width="2" height="2" fill="#3e3e3e"/><rect x="12.1" y="6.8" width="2" height="2" fill="#3e3e3e"/><rect x="12.1" y="10.8" width="2" height="2" fill="#3e3e3e"/></svg>
<span style="position:absolute;left:1190.00px;top:285.80px;font-size:13px;line-height:13px;font-weight:400;color:#141414;white-space:nowrap;transform:scaleX(0.9796);transform-origin:0 0;">Ngày ghi tăng</span>
<svg style="position:absolute;left:1273.1px;top:285.8px;" width="8" height="8" viewBox="0 0 8 8"><path d="M4 0.6V7.4M1.05 2.3L6.95 5.7M1.05 5.7L6.95 2.3" stroke="#c01c1c" stroke-width="1.5"/></svg>
<div style="position:absolute;left:1190px;top:308px;width:208px;height:32px;box-sizing:border-box;border:1px solid #787878;border-radius:3px;"></div>
<span style="position:absolute;left:1201.00px;top:317.00px;font-size:13px;line-height:13px;font-weight:400;color:#141414;white-space:nowrap;transform:scaleX(1.0510);transform-origin:0 0;">19/02/2023</span>
<svg style="position:absolute;left:1369px;top:315.5px;" width="18" height="17" viewBox="0 0 18 17"><rect x="0.9" y="1.9" width="16.2" height="14.3" rx="3.5" fill="none" stroke="#3e3e3e" stroke-width="1.3"/><path d="M5 0.6v2.6M13 0.6v2.6" stroke="#3e3e3e" stroke-width="1.3"/><rect x="3.9000000000000004" y="6.8" width="2" height="2" fill="#3e3e3e"/><rect x="3.9000000000000004" y="10.8" width="2" height="2" fill="#3e3e3e"/><rect x="8" y="6.8" width="2" height="2" fill="#3e3e3e"/><rect x="8" y="10.8" width="2" height="2" fill="#3e3e3e"/><rect x="12.1" y="6.8" width="2" height="2" fill="#3e3e3e"/><rect x="12.1" y="10.8" width="2" height="2" fill="#3e3e3e"/></svg>
<span style="position:absolute;left:1414.00px;top:285.80px;font-size:13px;line-height:13px;font-weight:400;color:#141414;white-space:nowrap;transform:scaleX(0.9958);transform-origin:0 0;">Năm theo dõi</span>
<div style="position:absolute;left:1414px;top:308px;width:94px;height:32px;box-sizing:border-box;border:1px solid #787878;border-radius:3px;background:#8f8f8f;"></div>
<span style="position:absolute;left:1425.00px;top:317.00px;font-size:13px;line-height:13px;font-weight:400;color:#141414;white-space:nowrap;">2023</span>
<div style="position:absolute;left:1193px;top:356px;width:425px;height:1px;background:#858585"></div>
<span style="position:absolute;left:1190.00px;top:375.80px;font-size:13px;line-height:13px;font-weight:400;color:#141414;white-space:nowrap;transform:scaleX(0.9668);transform-origin:0 0;">Ngày BĐ tính HM</span>
<svg style="position:absolute;left:1292.3px;top:375.8px;" width="8" height="8" viewBox="0 0 8 8"><path d="M4 0.6V7.4M1.05 2.3L6.95 5.7M1.05 5.7L6.95 2.3" stroke="#c01c1c" stroke-width="1.5"/></svg>
<div style="position:absolute;left:1190px;top:397px;width:208px;height:32px;box-sizing:border-box;border:1px solid #787878;border-radius:3px;"></div>
<span style="position:absolute;left:1201.00px;top:406.00px;font-size:13px;line-height:13px;font-weight:400;color:#141414;white-space:nowrap;transform:scaleX(1.0510);transform-origin:0 0;">19/02/2023</span>
<svg style="position:absolute;left:1369px;top:404.5px;" width="18" height="17" viewBox="0 0 18 17"><rect x="0.9" y="1.9" width="16.2" height="14.3" rx="3.5" fill="none" stroke="#3e3e3e" stroke-width="1.3"/><path d="M5 0.6v2.6M13 0.6v2.6" stroke="#3e3e3e" stroke-width="1.3"/><rect x="3.9000000000000004" y="6.8" width="2" height="2" fill="#3e3e3e"/><rect x="3.9000000000000004" y="10.8" width="2" height="2" fill="#3e3e3e"/><rect x="8" y="6.8" width="2" height="2" fill="#3e3e3e"/><rect x="8" y="10.8" width="2" height="2" fill="#3e3e3e"/><rect x="12.1" y="6.8" width="2" height="2" fill="#3e3e3e"/><rect x="12.1" y="10.8" width="2" height="2" fill="#3e3e3e"/></svg>
<span style="position:absolute;left:1414.00px;top:375.80px;font-size:13px;line-height:13px;font-weight:400;color:#141414;white-space:nowrap;transform:scaleX(0.9724);transform-origin:0 0;">Số năm sử dụng</span>
<div style="position:absolute;left:1414px;top:397px;width:208px;height:32px;box-sizing:border-box;border:1px solid #787878;border-radius:3px;background:#8f8f8f;"></div>
<span style="position:absolute;left:1603.70px;top:406.00px;font-size:13px;line-height:13px;font-weight:400;color:#141414;white-space:nowrap;transform:scaleX(0.9676);transform-origin:0 0;">0</span>
<span style="position:absolute;left:1190.00px;top:447.90px;font-size:13px;line-height:13px;font-weight:400;color:#141414;white-space:nowrap;transform:scaleX(0.9698);transform-origin:0 0;">Tỷ lệ hao mòn (%)</span>
<div style="position:absolute;left:1190px;top:470px;width:208px;height:32px;box-sizing:border-box;border:1px solid #787878;border-radius:3px;background:#8f8f8f;"></div>
<span style="position:absolute;left:1362.40px;top:479.00px;font-size:13px;line-height:13px;font-weight:400;color:#141414;white-space:nowrap;transform:scaleX(0.9600);transform-origin:0 0;">0,00</span>
<span style="position:absolute;left:1414.00px;top:447.90px;font-size:13px;line-height:13px;font-weight:400;color:#141414;white-space:nowrap;transform:scaleX(1.0113);transform-origin:0 0;">HM/KH năm</span>
<div style="position:absolute;left:1414px;top:470px;width:208px;height:32px;box-sizing:border-box;border:1px solid #787878;border-radius:3px;background:#8f8f8f;"></div>
<span style="position:absolute;left:1603.70px;top:479.00px;font-size:13px;line-height:13px;font-weight:400;color:#141414;white-space:nowrap;transform:scaleX(0.9676);transform-origin:0 0;">0</span>
<span style="position:absolute;left:1190.00px;top:521.00px;font-size:13px;line-height:13px;font-weight:400;color:#141414;white-space:nowrap;transform:scaleX(0.9724);transform-origin:0 0;">Số năm SD còn lại</span>
<div style="position:absolute;left:1190px;top:543px;width:208px;height:32px;box-sizing:border-box;border:1px solid #787878;border-radius:3px;background:#8f8f8f;"></div>
<span style="position:absolute;left:1379.70px;top:552.00px;font-size:13px;line-height:13px;font-weight:400;color:#141414;white-space:nowrap;transform:scaleX(0.9676);transform-origin:0 0;">0</span>
<span style="position:absolute;left:1414.00px;top:521.00px;font-size:13px;line-height:13px;font-weight:400;color:#141414;white-space:nowrap;transform:scaleX(0.9752);transform-origin:0 0;">Ngày KT tính HM</span>
<div style="position:absolute;left:1414px;top:543px;width:208px;height:32px;box-sizing:border-box;border:1px solid #787878;border-radius:3px;"></div>
<span style="position:absolute;left:1427.70px;top:552.00px;font-size:13px;line-height:13px;font-weight:400;color:#838383;white-space:nowrap;transform:scaleX(1.0470);transform-origin:0 0;">dd/MM/yyyy</span>
<svg style="position:absolute;left:1593px;top:550.5px;" width="18" height="17" viewBox="0 0 18 17"><rect x="0.9" y="1.9" width="16.2" height="14.3" rx="3.5" fill="none" stroke="#3e3e3e" stroke-width="1.3"/><path d="M5 0.6v2.6M13 0.6v2.6" stroke="#3e3e3e" stroke-width="1.3"/><rect x="3.9000000000000004" y="6.8" width="2" height="2" fill="#3e3e3e"/><rect x="3.9000000000000004" y="10.8" width="2" height="2" fill="#3e3e3e"/><rect x="8" y="6.8" width="2" height="2" fill="#3e3e3e"/><rect x="8" y="10.8" width="2" height="2" fill="#3e3e3e"/><rect x="12.1" y="6.8" width="2" height="2" fill="#3e3e3e"/><rect x="12.1" y="10.8" width="2" height="2" fill="#3e3e3e"/></svg>
<div style="position:absolute;left:1193px;top:591px;width:425px;height:1px;background:#858585"></div>
<span style="position:absolute;left:1190.00px;top:610.80px;font-size:13px;line-height:13px;font-weight:400;color:#141414;white-space:nowrap;transform:scaleX(0.9908);transform-origin:0 0;">Hao mòn lũy kế</span>
<div style="position:absolute;left:1190px;top:633px;width:208px;height:32px;box-sizing:border-box;border:1px solid #787878;border-radius:3px;background:#8f8f8f;"></div>
<span style="position:absolute;left:1379.70px;top:642.00px;font-size:13px;line-height:13px;font-weight:400;color:#141414;white-space:nowrap;transform:scaleX(0.9676);transform-origin:0 0;">0</span>
<span style="position:absolute;left:1414.00px;top:610.80px;font-size:13px;line-height:13px;font-weight:400;color:#141414;white-space:nowrap;transform:scaleX(0.9885);transform-origin:0 0;">Giá trị còn lại</span>
<div style="position:absolute;left:1414px;top:633px;width:208px;height:32px;box-sizing:border-box;border:1px solid #787878;border-radius:3px;background:#8f8f8f;"></div>
<span style="position:absolute;left:1553.30px;top:642.00px;font-size:13px;line-height:13px;font-weight:400;color:#141414;white-space:nowrap;transform:scaleX(0.9923);transform-origin:0 0;">1.000.000</span>
<div style="position:absolute;left:582px;top:330px;width:500px;height:198.5px;background:#ffffff;border-radius:4px"></div>
<svg style="position:absolute;left:616px;top:374px;" width="38" height="33" viewBox="0 0 38 33"><path d="M19 1.8c.8 0 1.5.4 1.9 1.1l15.4 26.6c.8 1.4-.2 3.1-1.9 3.1H3.6c-1.7 0-2.7-1.7-1.9-3.1L17.1 2.9c.4-.7 1.1-1.1 1.9-1.1z" fill="#fdc00a"/><rect x="17.3" y="11.6" width="3.5" height="9.8" rx="1.75" fill="#fff"/><circle cx="19" cy="26.4" r="1.95" fill="#fff"/></svg>
<span style="position:absolute;left:672.00px;top:370.10px;font-size:15px;line-height:15px;font-weight:400;color:#111111;white-space:nowrap;transform:scaleX(0.9864);transform-origin:0 0;">Nguyên giá loại</span>
<span style="position:absolute;left:778.40px;top:370.10px;font-size:15px;line-height:15px;font-weight:700;color:#111111;white-space:nowrap;transform:scaleX(0.9529);transform-origin:0 0;">2204 - Chất liệu bằng gỗ</span>
<span style="position:absolute;left:947.00px;top:370.10px;font-size:15px;line-height:15px;font-weight:400;color:#111111;white-space:nowrap;transform:scaleX(1.0184);transform-origin:0 0;">thuộc loại</span>
<span style="position:absolute;left:1016.40px;top:370.10px;font-size:15px;line-height:15px;font-weight:700;color:#111111;white-space:nowrap;transform:scaleX(0.9853);transform-origin:0 0;">IV -</span>
<span style="position:absolute;left:672.00px;top:393.80px;font-size:15px;line-height:15px;font-weight:700;color:#111111;white-space:nowrap;transform:scaleX(0.9359);transform-origin:0 0;">Tài sản cố định đặc thù</span>
<span style="position:absolute;left:832.00px;top:393.80px;font-size:15px;line-height:15px;font-weight:400;color:#111111;white-space:nowrap;transform:scaleX(0.9706);transform-origin:0 0;">phải lớn hơn hoặc bằng</span>
<span style="position:absolute;left:672.00px;top:417.80px;font-size:15px;line-height:15px;font-weight:700;color:#111111;white-space:nowrap;transform:scaleX(1.0296);transform-origin:0 0;">10.000.000</span>
<span style="position:absolute;left:749.50px;top:417.80px;font-size:15px;line-height:15px;font-weight:400;color:#111111;white-space:nowrap;">.</span>
<span style="position:absolute;left:672.00px;top:441.80px;font-size:15px;line-height:15px;font-weight:400;color:#111111;white-space:nowrap;transform:scaleX(0.9817);transform-origin:0 0;">Xem hướng dẫn khai báo thông tin nguyên giá</span>
<span style="position:absolute;left:980.20px;top:441.80px;font-size:15px;line-height:15px;font-weight:400;color:#2f6fd8;white-space:nowrap;transform:scaleX(0.9841);transform-origin:0 0;">tại đây</span>
<span style="position:absolute;left:1024.00px;top:441.80px;font-size:15px;line-height:15px;font-weight:400;color:#111111;white-space:nowrap;">.</span>
<div style="position:absolute;left:996px;top:481px;width:70px;height:31.700000000000045px;background:#4562f0;border-radius:3px"></div>
<span style="position:absolute;left:1012.00px;top:491.34px;font-size:12px;line-height:12px;font-weight:700;color:#ffffff;white-space:nowrap;transform:scaleX(0.9343);transform-origin:0 0;">Đồng ý</span>
<div style="position:absolute;left:1650px;top:309px;width:13px;height:89.5px;background:#4562f0;border-radius:6px 0 0 6px"></div>
<svg style="position:absolute;left:1654px;top:348px;" width="8" height="12" viewBox="0 0 8 12"><path d="M6 1.5L2 6l4 4.5" fill="none" stroke="#fff" stroke-width="1.8"/></svg>
</body></html>
